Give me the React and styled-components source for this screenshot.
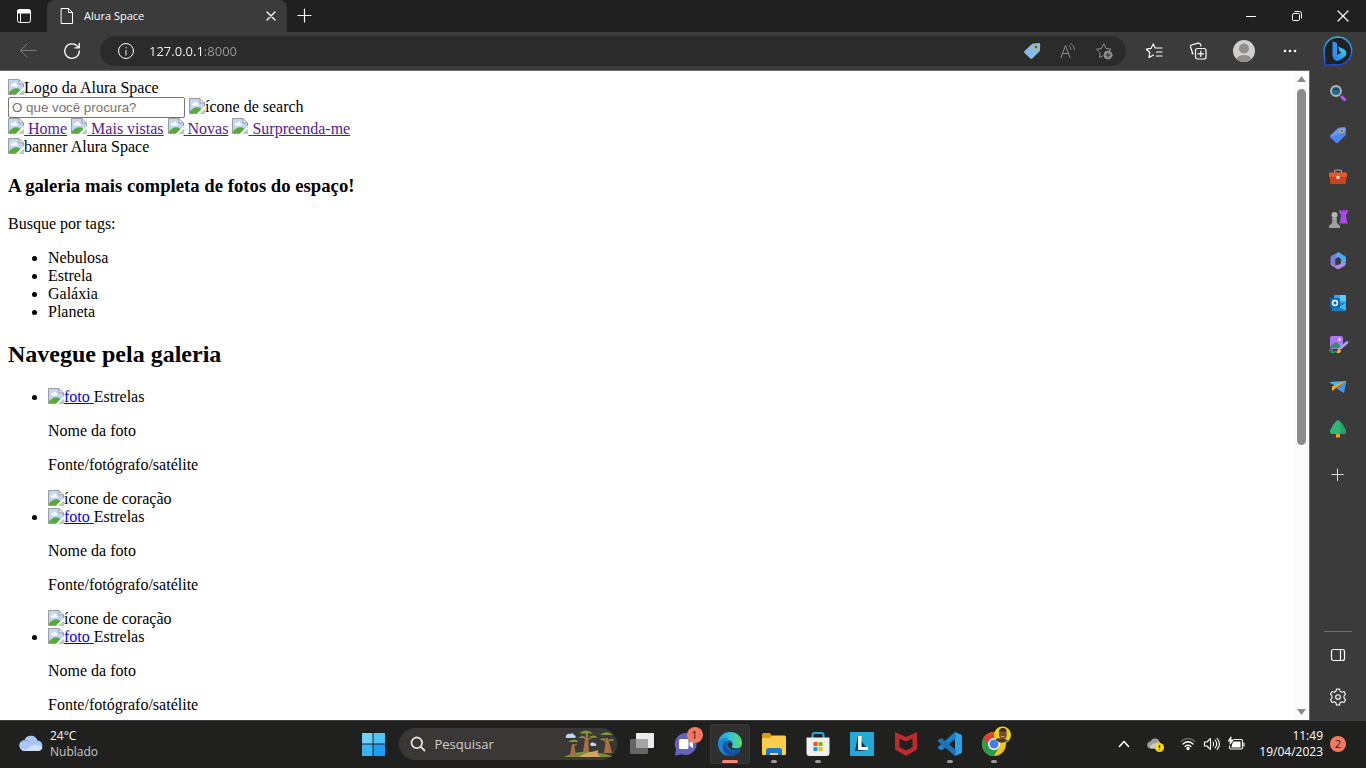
import React from 'react';
import styled, { createGlobalStyle } from 'styled-components';

const GlobalStyle = createGlobalStyle`
  * {
    box-sizing: border-box;
  }

  body {
    margin: 0;
    background-color: #3b3b3b;
    overflow: hidden;
  }

  button {
    border: none;
    padding: 0;
    background: none;
    color: inherit;
    font: inherit;
  }
`;

const Screen = styled.div`
  display: flex;
  flex-direction: column;
  height: 100vh;
  font-family: 'Open Sans', 'Noto Sans', sans-serif;
  font-size: 12px;
  color: #fff;
`;

const Svg = styled.svg`
  display: block;
  flex: none;
  width: ${props => props.$size || 16}px;
  height: ${props => props.$size || 16}px;
  overflow: visible;
`;

const LineSvg = styled(Svg)`
  fill: none;
  stroke: ${props => props.$color || '#fff'};
  stroke-width: ${props => props.$stroke || 1};
  stroke-linecap: round;
  stroke-linejoin: round;
`;

/* Tab strip */

const TabStrip = styled.header`
  display: flex;
  flex: none;
  height: 32px;
  background-color: #202020;
`;

const TabActions = styled.button`
  display: flex;
  align-items: center;
  justify-content: center;
  width: 47px;
`;

const Tab = styled.div`
  display: flex;
  align-items: center;
  gap: 9px;
  width: 240px;
  padding: 0 8px 0 12px;
  border-radius: 8px 8px 0 0;
  background-color: #3b3b3b;
`;

const TabTitle = styled.span`
  flex: 1;
  font-size: 11px;
  line-height: 16px;
`;

const TabButton = styled.button`
  display: flex;
  align-items: center;
  justify-content: center;
  width: ${props => props.$width || 16}px;
`;

const WindowControls = styled.div`
  display: flex;
  margin-left: auto;
`;

const WindowButton = styled.button`
  display: flex;
  align-items: center;
  justify-content: center;
  width: 46px;
`;

/* Toolbar */

const Toolbar = styled.div`
  display: flex;
  align-items: center;
  flex: none;
  height: 38px;
  padding: 0 2px 0 6px;
  background-color: #3b3b3b;
`;

const ToolButton = styled.button`
  display: flex;
  align-items: center;
  justify-content: center;
  width: ${props => props.$width || 44}px;
  height: 30px;
`;

const AddressBar = styled.form`
  display: flex;
  align-items: center;
  flex: 1;
  height: 30px;
  margin: 0 6px;
  padding: 0 4px;
  border-radius: 15px;
  background-color: #2b2b2b;
`;

const AddressInput = styled.input`
  flex: 1;
  min-width: 0;
  padding: 0 0 0 1px;
  border: none;
  outline: none;
  background: linear-gradient(90deg, #fff 55px, #9a9a9a 55px);
  background-clip: text;
  color: transparent;
  font-family: inherit;
  font-size: 13px;
  line-height: 20px;
`;

/* Content and sidebar */

const Main = styled.div`
  display: flex;
  flex: 1;
  min-height: 0;
`;

const Viewport = styled.div`
  display: flex;
  flex: 1;
  min-width: 0;
  border-top: 1px solid #6b6b6b;
  border-right: 1px solid #6b6b6b;
  background-color: #fff;
`;

const Page = styled.main`
  flex: 1;
  min-width: 0;
  padding: 8px;
  overflow: hidden;
  color: #000;
  font-family: 'Liberation Serif', 'Times New Roman', serif;
  font-size: 16px;
  line-height: 18px;

  p {
    margin: 16px 0;
  }

  ul {
    margin: 16px 0;
    padding-left: 40px;
  }

  h2,
  h3 {
    line-height: normal;
  }
`;

const PageLink = styled.a`
  color: ${props => props.$visited ? '#551a8b' : '#0000ee'};
`;

const SearchField = styled.input`
  width: 177px;
  height: 21px;
  padding: 2px 3px;
  border: 1px solid #767676;
  border-radius: 2px;
  font-family: 'Liberation Sans', Arial, sans-serif;

  &::placeholder {
    color: #757575;
  }
`;

const BrokenIcon = styled.svg`
  width: 16px;
  height: 16px;
  vertical-align: ${props => props.$onBaseline ? 'baseline' : 'text-top'};
`;

const ScrollBar = styled.div`
  display: flex;
  flex-direction: column;
  align-items: center;
  flex: none;
  width: 15px;
  padding: 4px 0;
  background-color: #fcfcfc;
`;

const ScrollTrack = styled.div`
  flex: 1;
  width: 9px;
  margin: 5px 0;
`;

const ScrollThumb = styled.div`
  height: 58%;
  border-radius: 5px;
  background-color: #8b8b8b;
`;

const SideBar = styled.aside`
  display: flex;
  flex-direction: column;
  align-items: center;
  flex: none;
  width: 56px;
  padding: 2px 0;
  background-color: #3b3b3b;
`;

const SideButton = styled.button`
  display: flex;
  align-items: center;
  justify-content: center;
  flex: none;
  width: 42px;
  height: 42px;
`;

const AddButton = styled(SideButton)`
  margin-top: 4px;
`;

const SideDivider = styled.hr`
  width: 28px;
  margin: auto 0 2px;
  border: none;
  border-top: 1px solid #6e6e6e;
`;

/* Taskbar */

const TaskBar = styled.footer`
  display: grid;
  grid-template-columns: 1fr auto 1fr;
  flex: none;
  height: 48px;
  background-color: #20201f;
  box-shadow: inset 0 1px #3d3e3d;
`;

const Weather = styled.button`
  display: flex;
  align-items: center;
  gap: 7px;
  padding-left: 19px;
  text-align: left;
  line-height: 16px;
`;

const Muted = styled.div`
  color: #c8c8c8;
`;

const Apps = styled.div`
  display: flex;
  align-items: center;
`;

const AppButton = styled.button`
  position: relative;
  display: flex;
  align-items: center;
  justify-content: center;
  width: 40px;
  height: 40px;
  margin: 0 2px;
  border-radius: 4px;
  background-color: ${props => props.$active ? '#2f2f2e' : 'transparent'};
  box-shadow: ${props => props.$active ? 'inset 0 0 0 1px #383837' : 'none'};

  &::after {
    content: '';
    position: absolute;
    bottom: 1px;
    width: ${props => props.$active ? 16 : props.$open ? 6 : 0}px;
    height: 3px;
    border-radius: 2px;
    background-color: ${props => props.$active ? '#f4866c' : '#9b9b9b'};
  }
`;

const CountBadge = styled.span`
  position: absolute;
  top: 3px;
  right: 3px;
  width: 16px;
  height: 16px;
  border-radius: 50%;
  background-color: #f4795f;
  color: #20201f;
  font-size: 11px;
  line-height: 16px;
  text-align: center;
`;

const TaskSearch = styled.label`
  display: flex;
  align-items: center;
  width: 218px;
  height: 32px;
  margin: 0 3px 0 4px;
  padding: 0 3px 0 11px;
  border-radius: 16px;
  background-color: #3a3837;
`;

const TaskSearchInput = styled.input`
  flex: 1;
  min-width: 0;
  padding: 0 0 0 9px;
  border: none;
  outline: none;
  background: none;
  font-family: inherit;
  font-size: 13px;

  &::placeholder {
    color: #cfcecd;
  }
`;

const Baobabs = styled.svg`
  width: 50px;
  height: 28px;
  flex: none;
`;

const Tray = styled.div`
  display: flex;
  align-items: center;
  justify-content: flex-end;
  padding-right: 20px;
`;

const TrayButton = styled.button`
  display: flex;
  align-items: center;
  justify-content: center;
  width: ${props => props.$width || 24}px;
  height: 40px;
`;

const Clock = styled.button`
  margin-left: 11px;
  text-align: right;
  font-size: 12px;
  line-height: 16px;
`;

const NoticeCount = styled.span`
  width: 16px;
  height: 16px;
  margin-left: 7px;
  border-radius: 50%;
  background-color: #f4795f;
  color: #20201f;
  font-size: 11px;
  line-height: 16px;
  text-align: center;
`;

function BrokenImage({ alt, onBaseline }) {
  return (
    <>
      <BrokenIcon viewBox="0 0 16 16" $onBaseline={onBaseline} aria-hidden="true">
        <path d="M.5.5H11L15.500 5v4L9 15.500H.5z" fill="#c2d7f8" />
        <path d="M3 7.500C2.500 5.500 4 5 5 5.300 5.500 3 8.500 3.500 8.500 5.500c1.500 0 1.500 2 .3 2z" fill="#fff" />
        <path d="M1 15v-1.500C3 10.500 6 8.800 9 9.200c1.300.2 2.500.8 3.500 1.800L8.500 15z" fill="#56ab3a" />
        <path d="M11 .5V5h4.500z" fill="#f3f3f3" />
        <path d="M8.500 15.500H.5V.5H11L15.500 5v3.500M11 .5V5h4.500" fill="none" stroke="#9c9c9c" />
        <path d="M16 8 8 16h4l4-4z" fill="#fff" />
        <path d="M11.500 15.500h4v-4z" fill="#b8d9ac" stroke="#a8a8a8" strokeWidth=".6" />
      </BrokenIcon>
      {alt}
    </>
  );
}

const navLinks = ['Home', 'Mais vistas', 'Novas', 'Surpreenda-me'];
const tags = ['Nebulosa', 'Estrela', 'Galáxia', 'Planeta'];
const photos = [
  { id: 1, favorite: true },
  { id: 2, favorite: true },
  { id: 3, favorite: false }
];

function GalleryPage() {
  return (
    <Page>
      <div><BrokenImage alt="Logo da Alura Space" /></div>
      <div>
        <SearchField type="text" placeholder="O que você procura?" aria-label="O que você procura?" />
        {' '}
        <BrokenImage alt="ícone de search" />
      </div>
      <nav>
        {navLinks.map(label => (
          <React.Fragment key={label}>
            <PageLink href="#" $visited><BrokenImage onBaseline /> {label}</PageLink>{' '}
          </React.Fragment>
        ))}
      </nav>
      <div><BrokenImage alt="banner Alura Space" /></div>
      <h3>A galeria mais completa de fotos do espaço!</h3>
      <p>Busque por tags:</p>
      <ul>
        {tags.map(tag => <li key={tag}>{tag}</li>)}
      </ul>
      <h2>Navegue pela galeria</h2>
      <ul>
        {photos.map(photo => (
          <li key={photo.id}>
            <PageLink href="#"><BrokenImage alt="foto" />{' '}</PageLink>
            <span>Estrelas</span>
            <p>Nome da foto</p>
            <p>Fonte/fotógrafo/satélite</p>
            {photo.favorite && <div><BrokenImage alt="ícone de coração" /></div>}
          </li>
        ))}
      </ul>
    </Page>
  );
}

function BingIcon() {
  return (
    <Svg $size={30} viewBox="0 0 30 30">
      <defs>
        <linearGradient id="bing-ring" x1="0" y1="0" x2="0" y2="1">
          <stop offset="0" stopColor="#27b5ea" />
          <stop offset="1" stopColor="#1b49d8" />
        </linearGradient>
        <linearGradient id="bing-b" x1="0" y1="1" x2="1" y2="0">
          <stop offset="0" stopColor="#2a6df5" />
          <stop offset="1" stopColor="#35e0f0" />
        </linearGradient>
      </defs>
      <path d="M15 1a14 14 0 1 1-4 27.500C8 28.800 4 29.500 1.500 29 2.500 26 1.500 20 1 15A14 14 0 0 1 15 1z" fill="#202020" stroke="url(#bing-ring)" strokeWidth="1.500" />
      <path d="M9.500 5.200 14 7v12.500L10.500 22q-1-1-1-2.500z" fill="#3391f5" />
      <path d="M15 10.500 20.500 13c3.300 1.500 3.500 5.500 1.500 7.500L16 24.500c-2.500 1.300-6-.5-6-3.500l8.500-4.500-2-1z" fill="url(#bing-b)" />
    </Svg>
  );
}

const sideItems = [
  {
    label: 'Pesquisar',
    icon: (
      <>
        <path d="m11 11 4.500 4.500" stroke="#c04df5" strokeWidth="3" />
        <circle cx="6" cy="6" r="5" fill="#22698d" stroke="#b9b9b9" strokeWidth="1.800" />
        <path d="M3 5c1-2.500 5-2.500 6 0z" fill="#164562" />
      </>
    )
  },
  {
    label: 'Compras',
    icon: (
      <>
        <path d="M8.500.8 14.500 0l1.500 1.500-.5 6.500-7.500 7.500q-1 .8-2 0L.5 10.200q-.8-1 0-2z" fill="#6b98f5" />
        <path d="m.5 10 5.500 5.500q1 .8 2 0l7.500-7.500.2-3z" fill="#4f80f2" />
        <circle cx="12" cy="4" r="1.500" fill="#413a3a" stroke="#f4c62b" />
      </>
    )
  },
  {
    label: 'Ferramentas',
    icon: (
      <>
        <path d="M4.500 4V2.500Q4.500 1 6 1h4q1.500 0 1.500 1.500V4" fill="none" stroke="#aaa" strokeWidth="1.200" />
        <rect x="-1" y="3.500" width="18" height="5" rx="1" fill="#e8542d" />
        <path d="M0 8.500h16V14q0 1-1 1H1q-1 0-1-1z" fill="#cc4320" />
        <circle cx="8" cy="8.500" r="1.800" fill="#d2d2d2" />
      </>
    )
  },
  {
    label: 'Jogos',
    icon: (
      <>
        <path d="M9-1h2v1.500h1.500V-1H15v1.500h1V-1h2l-1 4-1 1 .8 6 1.200 2.500H9L10.200 10 11 4 10 3z" fill="#ac48f0" />
        <circle cx="4.500" cy="4" r="3" fill="#b5b5b5" />
        <path d="M2 7h5v1.500L6.500 9l1 4 2.500 1.500V17H-1v-2.500L1.500 13l1-4L2 8.500z" fill="#9e9e9e" />
      </>
    )
  },
  {
    label: 'Microsoft 365',
    icon: (
      <>
        <path d="M9-1 2 2.500Q.5 3.500.5 5v5.500l5 2.500V6L12 2z" fill="#7f7ee8" />
        <path d="m8-.8 6.500 3.600q1.500.8 1.500 2.500V9l-5 3V6L5.500 3z" fill="#4aaeee" />
        <path d="M.5 10q0 2 1.500 2.800L8 16.500l6.500-3.500q1.500-1 1.500-3L10.500 10 5 13z" fill="#b48ade" />
        <path d="m5.500 6 3-1.700L11 6v4.500L8 12l-2.500-1.500z" fill="#3b3b42" />
      </>
    )
  },
  {
    label: 'Outlook',
    icon: (
      <>
        <rect x="4" y="0" width="12" height="12" rx="1" fill="#35a5e8" />
        <path d="M10 0h5q1 0 1 1v5h-6z" fill="#60c8f7" />
        <path d="M2 8h14v7q0 1-1 1H2z" fill="#177dc7" />
        <path d="m8 12 8-4v7.500z" fill="#40b5ef" />
        <rect x="0" y="3" width="10" height="10" rx="1" fill="#1068bb" />
        <circle cx="5" cy="8" r="2.400" fill="none" stroke="#fff" strokeWidth="1.500" />
      </>
    )
  },
  {
    label: 'Criador de imagens',
    icon: (
      <>
        <rect x="0" y="-1" width="13" height="13" rx="2" fill="#ad75f5" />
        <circle cx="9.500" cy="2.500" r="1.400" fill="#f3e6ff" />
        <path d="m0 9.500 5-4q1-.8 2 0l5 5.500H2q-2 0-2-1z" fill="#2a9263" />
        <path d="M-1 13.500c4-2 4 0 2 1.500C3 17 5 13 7 15" fill="none" stroke="#249c69" strokeWidth="1.500" />
        <path d="m10.500 11 6.500-5.500" stroke="#9aa8f7" strokeWidth="2.800" strokeLinecap="round" />
        <path d="M8.500 11 11 13.500c0 2-2 3-4.500 2.500 1-1 .5-3 2-5z" fill="#f4b62b" />
      </>
    )
  },
  {
    label: 'Enviar',
    icon: (
      <>
        <path d="M-1 3 16.500 2 7 8z" fill="#4ab8f2" />
        <path d="M16.500 2 2 7.500V12z" fill="#f7b324" />
        <path d="m2 12 3-4L16.500 2z" fill="#d88d1d" />
        <path d="M16.500 2 14 14 6.500 9.500z" fill="#4296ea" />
      </>
    )
  },
  {
    label: 'Árvore',
    icon: (
      <>
        <path d="M6 12h4v4.500H6z" fill="#e7a21d" />
        <path d="M8-1c2.500 0 7.500 9 8 11 .3 1.500-.5 3-2 3H2c-1.500 0-2.300-1.500-2-3C.5 8 5.500-1 8-1z" fill="#2fb675" />
        <path d="M8-1c2.500 0 7.500 9 8 11 .3 1.500-.5 3-2 3H7q6-2 3-11z" fill="#27a168" />
      </>
    )
  }
];

const taskApps = [
  {
    label: 'Visão de tarefas',
    icon: (
      <>
        <rect x="6" y="1" width="18" height="15" rx="1" fill="#ececec" />
        <rect x="0" y="7" width="18" height="15" rx="1" fill="#666" />
        <path d="M6 7h12v9H6z" fill="#a5a5a5" />
      </>
    )
  },
  {
    label: 'Chat',
    badge: 1,
    icon: (
      <>
        <path d="M12 1a11 11 0 1 1-4.500 21.200L1 23.500 2 17A11 11 0 0 1 12 1z" fill="#6464bd" />
        <rect x="5" y="7" width="9.500" height="10" rx="1.500" fill="#fff" />
        <path d="m15.500 10.500 3.500-3v9l-3.500-3z" fill="#fff" />
      </>
    )
  },
  {
    label: 'Edge',
    active: true,
    icon: (
      <>
        <defs>
          <linearGradient id="edge-wave" x1="0" y1="0" x2="1" y2="0">
            <stop offset="0" stopColor="#219be0" />
            <stop offset=".55" stopColor="#32c7cf" />
            <stop offset="1" stopColor="#65d957" />
          </linearGradient>
        </defs>
        <circle cx="12" cy="12" r="12" fill="#1370c7" />
        <path d="M.3 10C1.500 4 6 0 12 0c7 0 12 5 12 10.500 0 4-3 6-6 6s-5-1-4-2.500c1.500-2.500.5-6-3.500-6C5.500 8 1 11 .3 14z" fill="url(#edge-wave)" />
        <path d="M.2 10C3 6 8 5 11 7c-4 .5-6.500 3.500-6.500 7.500S7.500 22 11 24C4 23.500-.5 17 .2 10z" fill="#1688d8" />
        <path d="M9 10c-3 7 3 12 13.500 8-2.500 4-6.500 6-11 6-4-1.500-6.500-5-6.500-9C5 12.500 6.500 10.500 9 10z" fill="#114f9f" />
        <path d="M9.500 12c0 5 6 8 13.500 5v1.500h2V15c-2 1-5 1.700-8 1.500-3-.3-4-1.200-3-2.500 1-2 0-3-1.500-4-1.800 0-3 .8-3 2z" fill="#2f2f2e" />
      </>
    )
  },
  {
    label: 'Explorador de Arquivos',
    open: true,
    icon: (
      <>
        <path d="M0 2.500Q0 1 1.500 1H8l2 3v4H0z" fill="#d79a16" />
        <path d="M0 6h8l2-2.500h12.500Q24 3.500 24 5v17q0 1-1 1H1q-1 0-1-1z" fill="#fbcd4a" />
        <path d="M4 23v-4.500Q4 16 6.500 16h11q2.500 0 2.500 2.500V23h-4v-2H8v2z" fill="#1c79c8" />
      </>
    )
  },
  {
    label: 'Microsoft Store',
    open: true,
    icon: (
      <>
        <path d="M6.500 7V3Q6.500 1 8.500 1h7q2 0 2 2v4" fill="none" stroke="#28a8e0" strokeWidth="2" />
        <path d="M.5 5.500h23V21q0 3-3 3h-17q-3 0-3-3z" fill="#f0f0f0" />
        <path d="M7.500 10h4v4h-4z" fill="#f25022" />
        <path d="M12.500 10h4v4h-4z" fill="#7fba00" />
        <path d="M7.500 15h4v4h-4z" fill="#00a4ef" />
        <path d="M12.500 15h4v4h-4z" fill="#ffb900" />
      </>
    )
  },
  {
    label: 'Aplicativo L',
    icon: (
      <>
        <path d="M0 0h24v24H0z" fill="#24a9d6" />
        <path d="m8 4-3 15h5l8-1z" fill="#12376b" />
        <path d="M8 4h3.500v11H18v3H8z" fill="#fff" />
      </>
    )
  },
  {
    label: 'McAfee',
    icon: (
      <>
        <path d="m1 0 11 5L23 0v17.500L12 24 1 17.500z" fill="#bd2a2e" />
        <path d="m5.500 6.500 6.500 3 6.500-3v8.500L12 18.500 5.500 15z" fill="#20201f" />
      </>
    )
  },
  {
    label: 'Visual Studio Code',
    open: true,
    icon: (
      <>
        <path d="m17 0 7 3v18l-7 3z" fill="#2aa2ea" />
        <path d="m17 0 1 6L3.500 18.500 0 16.500V15z" fill="#1681cc" />
        <path d="M0 8v1.500L17 24l1-6L3.500 6z" fill="#1b72b9" />
      </>
    )
  },
  {
    label: 'Google Chrome',
    open: true,
    icon: (
      <>
        <circle cx="12" cy="12" r="12" fill="#fbc315" />
        <path d="M12 12 1.600 6A12 12 0 0 0 12 24l5.200-9z" fill="#2a9c48" />
        <path d="M1.600 6A12 12 0 0 1 22.400 6H12l-5.200 9z" fill="#df4132" />
        <circle cx="12" cy="12" r="6" fill="#fff" />
        <circle cx="12" cy="12" r="4.500" fill="#3f7fea" />
        <circle cx="20.500" cy="3" r="8.500" fill="#ead51b" />
        <path d="M17-1c1-4 7-4 7.500 0l.2 5-2 4h-3.500L17 4z" fill="#7a4a36" />
        <path d="M17-1c1-4 7-4 7.500 0l-1 .5h-5z" fill="#3f2a22" />
        <path d="M13.500 7.500c2-2 4-1.500 6-.5l4 .5 2.500.8a8.500 8.500 0 0 1-12.500-.8z" fill="#49372d" />
        <path d="M19 4.500h3.500" stroke="#c99c80" />
      </>
    )
  }
];

function BaobabScene() {
  return (
    <Baobabs viewBox="0 0 50 28" aria-hidden="true">
      <path d="M0 27c8-5 20-6 28-5 8 1 16 2 20 5z" fill="#7b8d35" />
      <path d="M15 27c5-4 12-5 20-7-3 3 0 5 1 7z" fill="#d6a265" />
      <path d="m22 3-3 19h6L24 3zM8 14 6 25h6l-2-11zM42 8l-2 15h8L44 8z" fill="#a87042" />
      <path d="m23 10 6-3M22 9l-5-3M9 16l4-2M43 12l5-3M42 12l-4-3" stroke="#a87042" strokeWidth="1.200" />
      <path d="M17 2q5-3 10 0l2 1.500H16zM14 8q4-3 7-1v1zM25 7q5-3 8 0l-1 1zM4 12q5-4 10-1v1H4zM37 4q5-3 9-1l3 2H37zM35 10q5-3 7-1l-1 1zM44 10q4-2 6 0l-1 1z" fill="#7b9a34" />
      <path d="M2 6q1-3 4-2 3-2 4 1 3 1 1 3H3q-2 0-1-2zM26 14q2-3 4-1 3 0 2 3h-5z" fill="#b9d6ec" />
    </Baobabs>
  );
}

function App() {
  return (
    <Screen>
      <GlobalStyle />
      <TabStrip>
        <TabActions aria-label="Menu de guias">
          <LineSvg viewBox="0 0 16 16">
            <rect x="1.500" y="1.500" width="13" height="13" rx="2" />
            <path d="M2 2h12v3H2z" fill="#fff" />
            <path d="M4.500 5v9" />
          </LineSvg>
        </TabActions>
        <Tab>
          <LineSvg viewBox="0 0 16 16">
            <path d="M2.500.5h7l4 4v11h-11zM9.500.5v4h4" />
          </LineSvg>
          <TabTitle>Alura Space</TabTitle>
          <TabButton aria-label="Fechar guia">
            <LineSvg $size={8} $stroke={1.3} viewBox="0 0 8 8"><path d="m0 0 8 8M8 0 0 8" /></LineSvg>
          </TabButton>
        </Tab>
        <TabButton $width={36} aria-label="Nova guia">
          <LineSvg $size={14} $stroke={1.2} viewBox="0 0 14 14"><path d="M6.500 0v13M0 6.500h13" /></LineSvg>
        </TabButton>
        <WindowControls>
          <WindowButton aria-label="Minimizar">
            <LineSvg $size={10} viewBox="0 0 10 10"><path d="M.5 5.500h9" /></LineSvg>
          </WindowButton>
          <WindowButton aria-label="Restaurar">
            <LineSvg $size={10} viewBox="0 0 10 10">
              <rect x=".5" y="2.500" width="7" height="7" rx="1" />
              <path d="M3 .5h4.500q2 0 2 2V7" />
            </LineSvg>
          </WindowButton>
          <WindowButton aria-label="Fechar">
            <LineSvg $size={10} $stroke={1.2} viewBox="0 0 10 10"><path d="m0 0 10 10M10 0 0 10" /></LineSvg>
          </WindowButton>
        </WindowControls>
      </TabStrip>

      <Toolbar>
        <ToolButton aria-label="Voltar">
          <LineSvg $color="#7c7c7c" viewBox="0 0 16 16"><path d="M.5 7.500H16M7 1 .5 7.500 7 14" /></LineSvg>
        </ToolButton>
        <ToolButton aria-label="Atualizar">
          <LineSvg $stroke={1.3} viewBox="0 0 16 16"><path d="M15.300 8A7.300 7.300 0 1 1 13 2.800L15 4.500M15.300.5v4.300H11" /></LineSvg>
        </ToolButton>
        <AddressBar>
          <ToolButton type="button" aria-label="Informações do site">
            <LineSvg viewBox="0 0 16 16">
              <circle cx="8" cy="8" r="7.500" />
              <path d="M8 7.500V12M8 4.500v.3" stroke="#bbb" strokeWidth="1.400" />
            </LineSvg>
          </ToolButton>
          <AddressInput aria-label="Endereço" defaultValue="127.0.0.1:8000" />
          <ToolButton type="button" $width={36} aria-label="Compras">
            <Svg viewBox="0 0 16 16">
              <path d="M8 1q.5-.6 1.500-.6L15 0q1.200 0 1.200 1.200L16 7q0 1-.6 1.500l-7 7q-1 .9-2 0L.5 10q-.9-1 0-2z" fill="#86bcea" />
              <circle cx="12" cy="4" r="1.600" fill="#6d5a14" stroke="#cfa91c" />
            </Svg>
          </ToolButton>
          <ToolButton type="button" $width={36} aria-label="Ler em voz alta">
            <LineSvg $color="#8e8e8e" viewBox="0 0 16 16">
              <path d="M1 14.500 5.500 2.500 10 14.500M2.500 10.500h6M9 2.500q2 1.500 2 4M11 .5q3.500 2.500 3.500 6" />
            </LineSvg>
          </ToolButton>
          <ToolButton type="button" $width={36} aria-label="Adicionar aos favoritos">
            <LineSvg $color="#8e8e8e" viewBox="0 0 16 16">
              <path d="M6.500 13 3.500 14.500l.7-5L.5 6.200l5-.8L7.800.8 10 5.400l5 .8-1.500 1.500" />
              <circle cx="12" cy="12" r="4" fill="#8e8e8e" />
              <path d="M12 10v4M10 12h4" stroke="#2b2b2b" />
            </LineSvg>
          </ToolButton>
        </AddressBar>
        <ToolButton aria-label="Favoritos">
          <LineSvg $stroke={1.2} viewBox="0 0 16 16">
            <path d="M7.500 12 3 14.500l.8-5L.3 6.200l4.700-.8L7.200 1l2 4H16M10.500 9H16M10.500 13H16" />
          </LineSvg>
        </ToolButton>
        <ToolButton aria-label="Coleções">
          <LineSvg $stroke={1.2} viewBox="0 0 16 16">
            <rect x="5.500" y="5.500" width="10.500" height="10.500" rx="2" />
            <path d="M10.800 8v5.500M8 10.800h5.500M3 11 .5 4Q0 2.500 1.500 2L8 .2Q10 0 10.500 1.500L11 3M3 11q-1-.5-1-1.500" />
          </LineSvg>
        </ToolButton>
        <ToolButton $width={48} aria-label="Perfil">
          <Svg $size={22} viewBox="0 0 22 22">
            <circle cx="11" cy="11" r="11" fill="#d2d0ce" />
            <circle cx="11" cy="8.500" r="5" fill="#918f8d" />
            <path d="M3.500 19q1.500-4 7.500-4t7.500 4a11 11 0 0 1-15 0z" fill="#918f8d" />
          </Svg>
        </ToolButton>
        <ToolButton aria-label="Configurações e mais">
          <Svg viewBox="0 0 16 16" fill="#fff">
            <circle cx="3" cy="8" r="1.300" />
            <circle cx="8" cy="8" r="1.300" />
            <circle cx="13" cy="8" r="1.300" />
          </Svg>
        </ToolButton>
        <ToolButton $width={52} aria-label="Bing"><BingIcon /></ToolButton>
      </Toolbar>

      <Main>
        <Viewport>
          <GalleryPage />
          <ScrollBar>
            <Svg $size={9} viewBox="0 0 9 9"><path d="M4.500 1 9 7H0z" fill="#8b8b8b" /></Svg>
            <ScrollTrack><ScrollThumb /></ScrollTrack>
            <Svg $size={9} viewBox="0 0 9 9"><path d="M4.500 8 9 2H0z" fill="#8b8b8b" /></Svg>
          </ScrollBar>
        </Viewport>
        <SideBar>
          {sideItems.map(item => (
            <SideButton key={item.label} aria-label={item.label}>
              <Svg viewBox="0 0 16 16">{item.icon}</Svg>
            </SideButton>
          ))}
          <AddButton aria-label="Personalizar">
            <LineSvg $size={12} $color="#ddd" viewBox="0 0 12 12"><path d="M5.500 0v11.500M0 5.500h11.500" /></LineSvg>
          </AddButton>
          <SideDivider />
          <SideButton aria-label="Ocultar barra lateral">
            <LineSvg $stroke={1.2} viewBox="0 0 16 16">
              <rect x="1.500" y="2.500" width="13" height="11" rx="2" />
              <path d="M10.500 2.500v11" />
            </LineSvg>
          </SideButton>
          <SideButton aria-label="Configurações">
            <LineSvg $stroke={1.1} viewBox="0 0 16 16">
              <path d="m6.500 0 3 0 .6 2.300 1.600.9 2.300-.7 1.500 2.600L14 7v2l1.500 1.900-1.500 2.600-2.300-.7-1.600.9L9.500 16h-3l-.6-2.300-1.600-.9-2.300.7L.5 10.900 2 9V7L.5 5.100 2 2.500l2.300.7 1.600-.9z" />
              <circle cx="8" cy="8" r="2.300" />
            </LineSvg>
          </SideButton>
        </SideBar>
      </Main>

      <TaskBar>
        <Weather>
          <Svg $size={24} viewBox="0 0 24 24">
            <path d="M6 19a5.500 5.500 0 0 1-.5-11A7 7 0 0 1 18.500 8.500 5.300 5.300 0 0 1 19 19z" fill="#a9c8f7" />
            <path d="M2 17q5 2 8-1 4-5 9-3 3 1 4.500 3-1.500 3-4.500 3H6q-3 0-4-2z" fill="#cfe0fb" />
            <path d="M5 8.500q4-1 6 2" stroke="#7d9fe0" fill="none" />
          </Svg>
          <div>
            <div>24°C</div>
            <Muted>Nublado</Muted>
          </div>
        </Weather>
        <Apps>
          <AppButton aria-label="Iniciar">
            <Svg $size={24} viewBox="0 0 24 24">
              <path d="M1 1h10.500v10.500H1z" fill="#6bd0fb" />
              <path d="M12.500 1H24v10.500H12.500z" fill="#4cc3fb" />
              <path d="M1 12.500h10.500V24H1z" fill="#35b4f8" />
              <path d="M12.500 12.500H24V24H12.500z" fill="#1c9cf3" />
            </Svg>
          </AppButton>
          <TaskSearch>
            <LineSvg $color="#dedede" $stroke={1.8} viewBox="0 0 16 16">
              <circle cx="6.800" cy="6.800" r="5.300" />
              <path d="m11 11 3.500 3.500" />
            </LineSvg>
            <TaskSearchInput type="search" placeholder="Pesquisar" aria-label="Pesquisar" />
            <BaobabScene />
          </TaskSearch>
          {taskApps.map(app => (
            <AppButton key={app.label} aria-label={app.label} $active={app.active} $open={app.open}>
              <Svg $size={24} viewBox="0 0 24 24">{app.icon}</Svg>
              {app.badge && <CountBadge>{app.badge}</CountBadge>}
            </AppButton>
          ))}
        </Apps>
        <Tray>
          <TrayButton aria-label="Mostrar ícones ocultos">
            <LineSvg $size={10} $stroke={1.6} viewBox="0 0 10 10"><path d="m.5 7.500 4.500-5 4.500 5" /></LineSvg>
          </TrayButton>
          <TrayButton $width={40} aria-label="OneDrive">
            <Svg viewBox="0 0 16 16">
              <path d="M3 12.500a3.500 3.500 0 0 1-.5-7Q4 2 7.500 2.500q3 .2 4 3L9 12.500z" fill="#9c9c9c" />
              <path d="M2 11q2-4 6-4 3-2 4.500 0v5.500H3z" fill="#c9c9c9" />
              <circle cx="11.500" cy="11.500" r="4.500" fill="#fcdc0b" />
              <path d="M11.500 9v3M11.500 13.500v.8" stroke="#222" strokeWidth="1.400" />
            </Svg>
          </TrayButton>
          <TrayButton aria-label="Rede">
            <LineSvg $stroke={1.3} viewBox="0 0 16 16">
              <path d="M1 5.500q7-6 14 0" stroke="#6b6b6b" />
              <path d="M3 8q5-4.500 10 0M5 10.500q3-2.500 6 0" />
              <circle cx="8" cy="12.500" r="1" fill="#fff" />
            </LineSvg>
          </TrayButton>
          <TrayButton aria-label="Volume">
            <LineSvg $stroke={1.1} viewBox="0 0 16 16">
              <path d="M.5 6H3l3.500-3.500v11L3 10H.5zM9 6q1.500 2 0 4M11 4q3.500 4 0 8M13 2.500q5 5.500 0 11" />
            </LineSvg>
          </TrayButton>
          <TrayButton aria-label="Bateria">
            <LineSvg $stroke={1.1} viewBox="0 0 16 16">
              <path d="M6 3.500h7q1.500 0 1.500 1.500v6.500q0 1.500-1.500 1.500H3q-1.500 0-1.500-1.500V10" />
              <path d="M5.500 6H12v5H4z" fill="#fff" />
              <path d="M16 7v3" />
              <path d="M3 1 .5 5H3L2 8l3-4H2.500z" fill="#fff" />
            </LineSvg>
          </TrayButton>
          <Clock>
            <div>11:49</div>
            <div>19/04/2023</div>
          </Clock>
          <NoticeCount>2</NoticeCount>
        </Tray>
      </TaskBar>
    </Screen>
  );
}

export default App;
